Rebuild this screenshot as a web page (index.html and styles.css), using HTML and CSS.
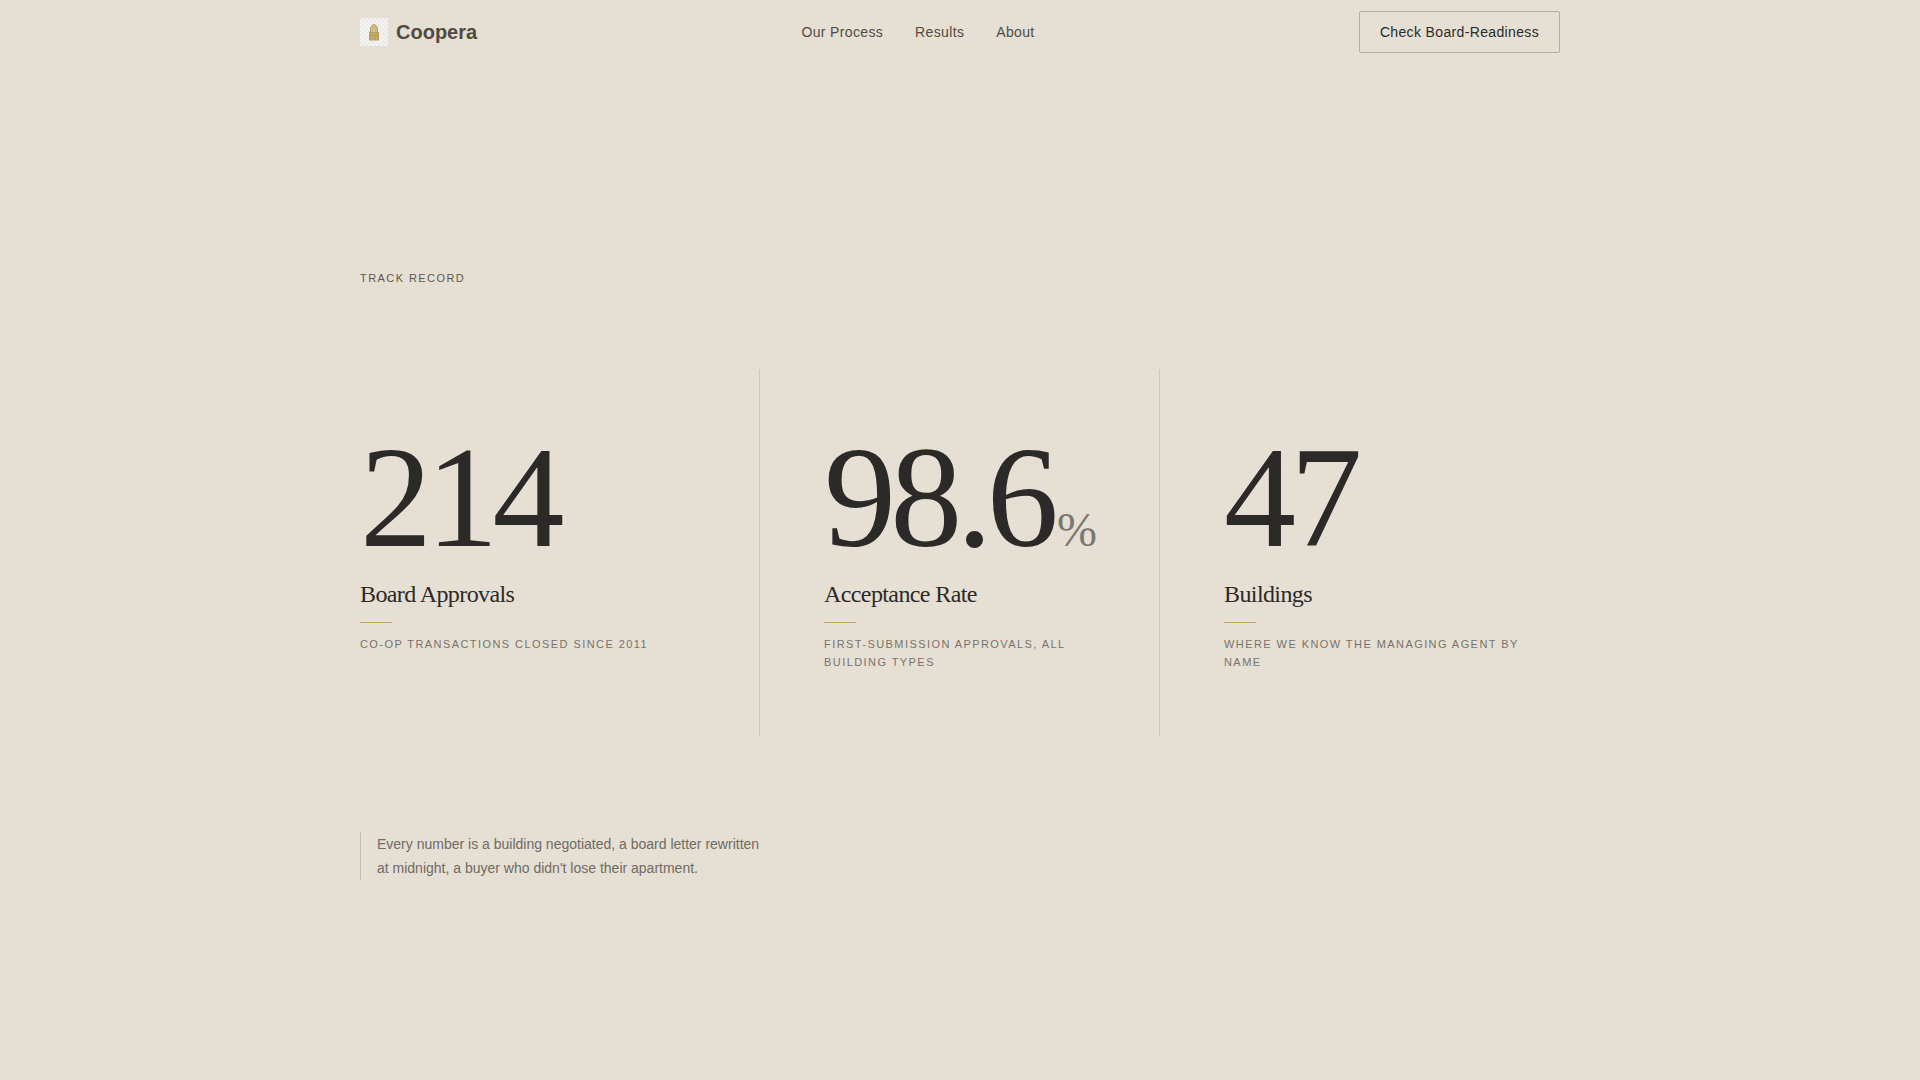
FILE: index.html
```html
<!DOCTYPE html>
<html lang="en">
<head>
<meta charset="utf-8">
<meta name="viewport" content="width=device-width, initial-scale=1">
<title>Coopera</title>
<link rel="stylesheet" href="styles.css">
</head>
<body>
<header class="site-header container">
  <a class="brand" href="#">
    <svg class="brand-mark" viewBox="0 0 28 28" aria-hidden="true">
      <defs>
        <pattern id="check" width="4" height="4" patternUnits="userSpaceOnUse">
          <rect width="4" height="4" fill="#f5f3f2"/>
          <path d="M0 0h2v2H0zM2 2h2v2H2z" fill="#edebea"/>
        </pattern>
      </defs>
      <rect width="28" height="28" fill="url(#check)"/>
      <path d="M10.500 15V9.500L12 8V7.500L14 6.500l2 1V8L17.500 9.500V15" fill="#cfbd88" stroke="#b79f5b"/>
      <path d="M13 14V9.500h2V14" fill="#e5dab9" stroke="#b79f5b" stroke-width=".6"/>
      <path d="M9 14h10v8.500H9z" fill="#b89e58"/>
      <path d="M11.500 22v-3.500M14 22v-4M16.500 22v-3.500M10 16h8" stroke="#d0bc82" stroke-width=".8"/>
    </svg>
    <span>Coopera</span>
  </a>
  <nav class="nav" aria-label="Main">
    <a href="#process">Our Process</a>
    <a href="#results">Results</a>
    <a href="#about">About</a>
  </nav>
  <button class="cta" type="button">Check Board-Readiness</button>
</header>
<main class="record container" id="results">
  <h1 class="eyebrow">Track Record</h1>
  <div class="stats">
    <section class="stat">
      <p class="number">214</p>
      <h2 class="label">Board Approvals</h2>
      <p class="detail">Co-op transactions closed since 2011</p>
    </section>
    <section class="stat">
      <p class="number">98.6<span class="unit">%</span></p>
      <h2 class="label">Acceptance Rate</h2>
      <p class="detail">First-submission approvals, all building types</p>
    </section>
    <section class="stat">
      <p class="number">47</p>
      <h2 class="label">Buildings</h2>
      <p class="detail">Where we know the managing agent by name</p>
    </section>
  </div>
  <p class="note">Every number is a building negotiated, a board letter rewritten at midnight, a buyer who didn't lose their apartment.</p>
</main>
</body>
</html>
```
FILE: styles.css
```css
*, *::before, *::after { box-sizing: border-box; }

body {
  margin: 0;
  background: #e6dfd3;
  color: #2b2a29;
  font-family: "Liberation Sans", Arial, sans-serif;
}

h1, h2, p { margin: 0; font-weight: 400; }

a { color: inherit; text-decoration: none; }

.container {
  width: 100%;
  max-width: 1248px;
  margin: 0 auto;
  padding: 0 24px;
}

.site-header {
  display: flex;
  flex-wrap: wrap;
  justify-content: space-between;
  align-items: center;
  min-height: 64px;
}

.brand {
  display: flex;
  align-items: center;
  gap: 8px;
  color: #504b42;
  font-size: 20px;
  font-weight: 700;
}

.brand-mark { width: 28px; height: 28px; }

.nav {
  display: flex;
  gap: 32px;
  color: #504b42;
  font-size: 14px;
  letter-spacing: 0.025em;
}

.cta {
  height: 42px;
  padding: 0 20px;
  border: 1px solid #b5ada0;
  border-radius: 2px;
  background: transparent;
  color: #2b2a29;
  font: inherit;
  font-size: 14px;
  letter-spacing: 0.025em;
}

.record { padding-top: 206px; padding-bottom: 96px; }

.eyebrow {
  color: #5e584f;
  font-size: 11px;
  line-height: 16px;
  letter-spacing: 0.13em;
  text-transform: uppercase;
}

.stats {
  display: grid;
  grid-template-columns: repeat(3, 1fr);
  margin-top: 83px;
}

.stat { padding: 64px 32px 65px 64px; }
.stat:first-child { padding-left: 0; }
.stat:not(:last-child) { border-right: 1px solid #cec6b9; }

.number {
  font-family: "Liberation Serif", "Times New Roman", serif;
  font-size: 144px;
  line-height: 130px;
  letter-spacing: -0.04em;
}

.unit {
  color: #7b7770;
  font-size: 48px;
  line-height: 1;
  letter-spacing: 0;
  margin-left: 4px;
}

.label {
  margin-top: 16px;
  font-family: "Liberation Serif", "Times New Roman", serif;
  font-size: 24px;
  line-height: 31px;
  letter-spacing: -0.025em;
}

.label::after {
  content: "";
  display: block;
  width: 32px;
  height: 1px;
  margin: 12px 0;
  background: #c0a45c;
}

.detail {
  color: #77736c;
  font-size: 11px;
  line-height: 18px;
  letter-spacing: 0.13em;
  text-transform: uppercase;
}

.note {
  max-width: 400px;
  margin-top: 96px;
  padding-left: 16px;
  border-left: 1px solid #c6beb1;
  color: #6f6b64;
  font-size: 14px;
  line-height: 24px;
}

@media (max-width: 900px) {
  .site-header { gap: 16px; }
  .stats { grid-template-columns: 1fr; }
  .stat { padding-left: 0; }
  .stat:not(:last-child) { border-right: 0; border-bottom: 1px solid #cec6b9; }
}
```
